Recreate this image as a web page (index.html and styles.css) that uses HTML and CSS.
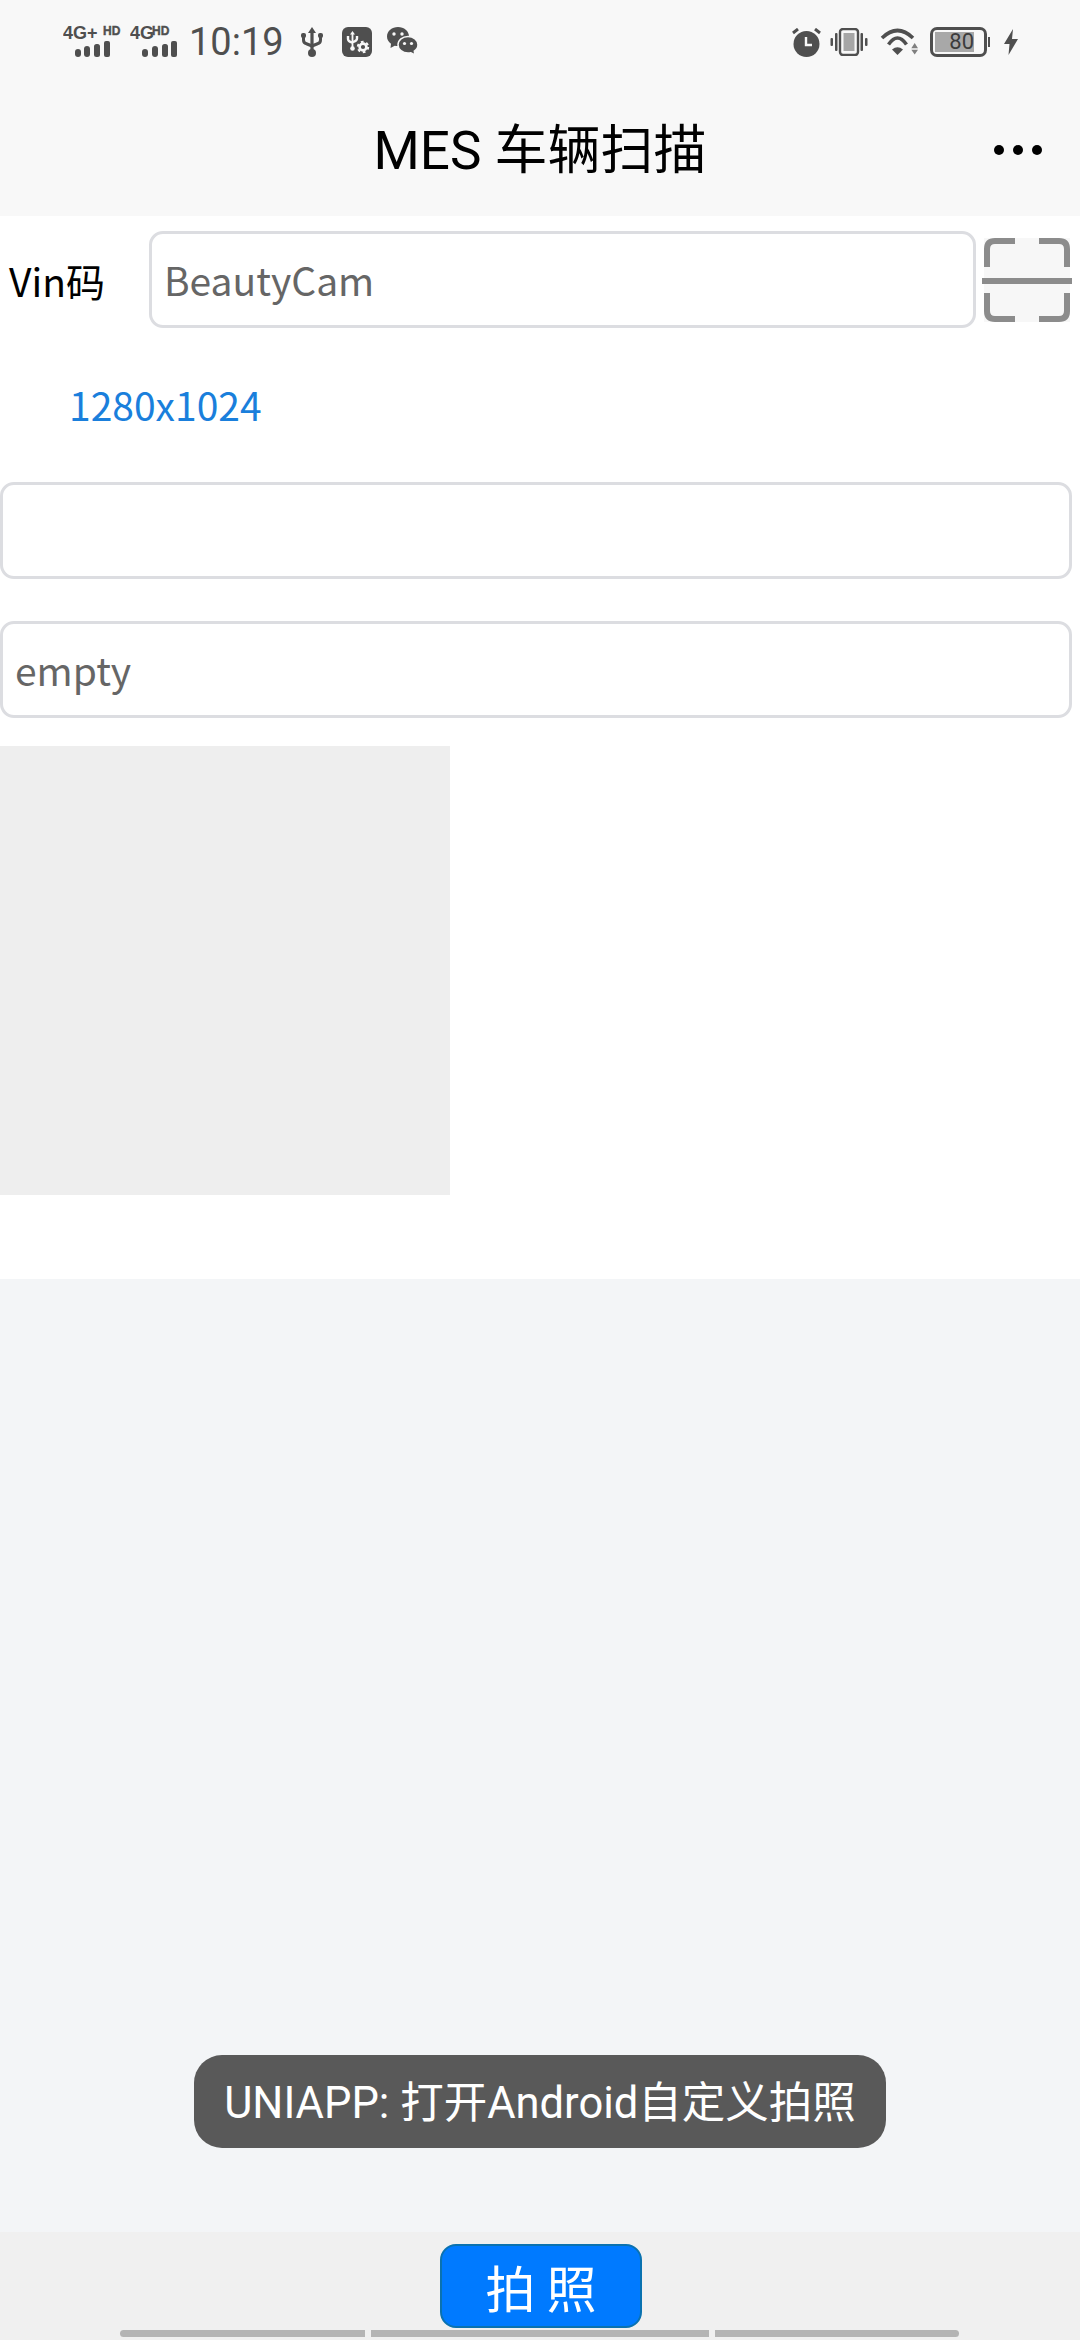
FILE: index.html
```html
<!DOCTYPE html>
<html lang="zh">
<head>
    <meta charset="UTF-8">
    <meta name="viewport" content="width=device-width, initial-scale=1.0">
    <title>MES 车辆扫描</title>
    <link rel="stylesheet" href="styles.css">
</head>
<body>
    <div class="status">
        <div class="status-left">
            <svg class="sig-a" width="60" height="52" viewBox="0 -10 60 52">
                <text class="sig-big" x="0" y="13">4G+</text>
                <text class="sig-small" x="40" y="9">HD</text>
                <rect x="12" y="23" width="6" height="8" rx="3"/>
                <rect x="21" y="20" width="6" height="11" rx="3"/>
                <rect x="31" y="18" width="6" height="13" rx="2.500"/>
                <rect x="41" y="15" width="6" height="16" rx="2"/>
            </svg>
            <svg class="sig-b" width="48" height="52" viewBox="0 -10 48 52">
                <text class="sig-big" x="0" y="13">4G</text>
                <text class="sig-small" x="22" y="9">HD</text>
                <rect x="12" y="23" width="6" height="8" rx="3"/>
                <rect x="22" y="20" width="6" height="11" rx="3"/>
                <rect x="32" y="18" width="6" height="13" rx="2.500"/>
                <rect x="41" y="15" width="6" height="16" rx="2"/>
            </svg>
            <span class="time">10:19</span>
            <svg class="ic-usb" width="22" height="30" viewBox="0 0 22 30">
                <path d="M11 0l4 6h-2.400v18h-3.200V6H7z"/>
                <circle cx="11" cy="26" r="4"/>
                <path class="line" d="M2.500 9v4q0 3 3 3.800L11 19M19.500 9v4q0 3-3 3.800L11 19"/>
                <rect x="0" y="6" width="5" height="5" rx="2"/>
                <rect x="17" y="6" width="5" height="5" rx="2"/>
            </svg>
            <svg class="ic-app" width="30" height="30" viewBox="0 0 30 30">
                <rect width="30" height="30" rx="6"/>
                <path class="white" d="M10.500 4l2.500 3.500h-1.600v13h-1.800v-13h-1.600z"/>
                <circle class="white" cx="10.500" cy="21.500" r="2.300"/>
                <path class="white-line" d="M6 9v3q0 2.500 4.500 3.500M15 9v2.500q0 2.500-4.500 3.500"/>
                <circle class="white-ring" cx="21" cy="20" r="3.400"/>
                <circle class="white-teeth" cx="21" cy="20" r="5.200"/>
            </svg>
            <svg class="ic-chat" width="31" height="30" viewBox="0 0 31 30">
                <path d="M11 0C5 0 0 4 0 9.500c0 3 1.500 5.500 4 7.200L3.500 21l4.200-2.300c1.100.3 2.200.4 3.300.4 6 0 11-4 11-9.600S17 0 11 0z"/>
                <circle class="bg" cx="7" cy="7" r="1.700"/>
                <circle class="bg" cx="15" cy="7" r="1.700"/>
                <path class="chat-front" d="M21 9.500c-5.500 0-10 3.700-10 8.300s4.500 8.300 10 8.300c1 0 2-.1 2.900-.4L28 28l-.7-3.800c2.300-1.500 3.700-3.800 3.700-6.400 0-4.600-4.500-8.300-10-8.300z"/>
                <circle class="bg" cx="17.500" cy="16.500" r="1.600"/>
                <circle class="bg" cx="24.500" cy="16.500" r="1.600"/>
            </svg>
        </div>
        <div class="status-right">
            <svg class="ic-alarm" width="29" height="29" viewBox="0 0 29 29">
                <circle cx="14.500" cy="16" r="13"/>
                <path class="line" d="M1 5l5-4M28 5l-5-4"/>
                <path class="white-line" d="M14 9v8h6"/>
            </svg>
            <svg class="ic-vib" width="38" height="28" viewBox="0 0 38 28">
                <rect class="phone" x="10" y="1" width="18" height="26" rx="3"/>
                <rect class="screen" x="13.500" y="5" width="11" height="18"/>
                <rect x="5" y="5" width="2.500" height="18" rx="1"/>
                <rect x="0.500" y="10" width="2.500" height="8" rx="1"/>
                <rect x="30.500" y="5" width="2.500" height="18" rx="1"/>
                <rect x="35" y="10" width="2.500" height="8" rx="1"/>
            </svg>
            <svg class="ic-wifi" width="38" height="28" viewBox="0 0 38 28">
                <path class="wifi-arc" d="M2 10Q17.500-5 33 10M8.500 16.500Q17.500 3.500 26.500 16.500"/>
                <path d="M12 21.500Q17.500 17 23 21.500L17.500 27z"/>
                <path class="arrows" d="M34.700 15l3.400 5.300h-6.800zM34.700 26.500l-3.400-4.800h6.800z"/>
            </svg>
            <div class="battery">
                <div class="battery-body">
                    <div class="battery-fill">80</div>
                </div>
                <div class="battery-tip"></div>
            </div>
            <svg class="ic-bolt" width="14" height="26" viewBox="0 0 14 26">
                <path d="M9 0L0 15h5.500L4.500 26 14 10H8z"/>
            </svg>
        </div>
    </div>

    <div class="navbar">
        <span class="nav-title">MES 车辆扫描</span>
        <div class="nav-more"><i></i><i></i><i></i></div>
    </div>

    <div class="content">
        <div class="row">
            <div class="row-label">Vin码</div>
            <div class="field field-vin">BeautyCam</div>
            <svg class="scan" width="90" height="88" viewBox="0 0 90 88">
                <rect x="2" y="2" width="86" height="84" fill="#f7f7f7"/>
                <path d="M33 5H13q-8 0-8 8v18M57 5h20q8 0 8 8v18M5 57v18q0 8 8 8h20M85 57v18q0 8-8 8H57"/>
                <path d="M0 45h90"/>
            </svg>
        </div>
        <div class="res">1280x1024</div>
        <div class="field field-wide"></div>
        <div class="field field-wide field-empty">empty</div>
        <div class="preview"></div>
    </div>

    <div class="blank"></div>

    <div class="footer">
        <button class="bot">拍 照</button>
    </div>

    <div class="toast">UNIAPP: 打开Android自定义拍照</div>
    <div class="gesture"><span class="g1"></span><span class="g2"></span><span class="g3"></span></div>
</body>
</html>
```

FILE: styles.css
```css
* {
    box-sizing: border-box;
}
body {
    margin: 0;
    padding: 0;
    width: 1080px;
    height: 2340px;
    position: relative;
    overflow: hidden;
    display: flex;
    flex-direction: column;
    font-family: "Noto Sans CJK SC", "Noto Sans", sans-serif;
    background-color: #f3f5f7;
}

/* status bar */
.status {
    height: 84px;
    background-color: #f8f8f8;
    display: flex;
    justify-content: space-between;
    align-items: center;
    padding: 0 62px 0 63px;
    color: #4f4f4f;
}
.status svg {
    display: block;
    fill: #4f4f4f;
}
.status-left,
.status-right {
    display: flex;
    align-items: center;
}
.sig-big {
    font-family: "Liberation Sans", sans-serif;
    font-weight: bold;
    font-size: 18px;
}
.sig-small {
    font-family: "Liberation Sans", sans-serif;
    font-weight: bold;
    font-size: 12px;
    stroke: #4f4f4f;
    stroke-width: 0.4;
}
.sig-b {
    margin-left: 7px;
}
.time {
    font-family: Roboto, sans-serif;
    font-size: 38px;
    line-height: 44px;
    margin-left: 11px;
}
.ic-usb {
    margin-left: 17px;
}
.ic-app {
    margin-left: 19px;
}
.ic-chat {
    margin-left: 15px;
}
.status .line {
    fill: none;
    stroke: #4f4f4f;
    stroke-width: 3;
}
.status .white {
    fill: #f8f8f8;
}
.status .white-line {
    fill: none;
    stroke: #f8f8f8;
    stroke-width: 2.4;
}
.status .white-ring {
    fill: none;
    stroke: #f8f8f8;
    stroke-width: 2.6;
}
.status .white-teeth {
    fill: none;
    stroke: #f8f8f8;
    stroke-width: 2;
    stroke-dasharray: 2.700 2.740;
}
.status .bg {
    fill: #f8f8f8;
}
.status .chat-front {
    stroke: #f8f8f8;
    stroke-width: 1.5;
}
.status .phone {
    fill: none;
    stroke: #4f4f4f;
    stroke-width: 2.4;
}
.status .screen {
    fill: #a6a6a6;
}
.status .wifi-arc {
    fill: none;
    stroke: #4f4f4f;
    stroke-width: 3.6;
}
.status .arrows {
    fill: #808080;
}
.ic-vib {
    margin-left: 9px;
}
.ic-wifi {
    margin-left: 12px;
}
.battery {
    margin-left: 12px;
    display: flex;
    align-items: center;
}
.battery-body {
    width: 57px;
    height: 30px;
    border: 3px solid #4f4f4f;
    border-radius: 7px;
    padding: 2px;
}
.battery-fill {
    width: 39px;
    height: 20px;
    background-color: #a8a8a8;
    font-family: Roboto, sans-serif;
    font-size: 22px;
    line-height: 20px;
    text-align: right;
    color: #3c3c3c;
}
.battery-tip {
    width: 2px;
    height: 10px;
    margin-left: 1px;
    background-color: #4f4f4f;
}
.ic-bolt {
    margin-left: 14px;
}

/* title bar */
.navbar {
    height: 132px;
    background-color: #f8f8f8;
    position: relative;
    display: flex;
    justify-content: center;
    align-items: center;
    padding-bottom: 9px;
}
.nav-title {
    font-family: Roboto, "Noto Sans CJK SC", sans-serif;
    font-size: 53px;
    color: #000;
}
.nav-more {
    position: absolute;
    right: 38px;
    top: 61px;
    display: flex;
    gap: 9px;
}
.nav-more i {
    display: block;
    width: 10px;
    height: 10px;
    border-radius: 50%;
    background-color: #000;
}

/* form */
.content {
    height: 1063px;
    background-color: #fff;
    padding-top: 15px;
}
.row {
    display: flex;
    align-items: center;
    height: 97px;
}
.row-label {
    width: 149px;
    padding-left: 9px;
    font-size: 39px;
    color: #000;
}
.field {
    height: 97px;
    border: 3px solid #dcdde1;
    border-radius: 14px;
    padding: 0 12px;
    font-size: 39px;
    line-height: 91px;
    color: #666;
    background-color: #fff;
}
.field-vin {
    width: 827px;
}
.scan {
    display: block;
    margin-left: 6px;
    fill: none;
}
.scan path {
    stroke: #8c8c8c;
    stroke-width: 6;
}
.res {
    margin-top: 48px;
    padding-left: 69px;
    height: 56px;
    font-size: 39px;
    line-height: 56px;
    color: #1a7fdc;
}
.field-wide {
    width: 1072px;
    margin-top: 50px;
}
.field-empty {
    margin-top: 42px;
}
.preview {
    width: 450px;
    height: 449px;
    margin-top: 28px;
    background-color: #eeeeee;
}

.blank {
    flex: 1;
    background-color: #f3f5f7;
}
.footer {
    height: 108px;
    background-color: #f0f0f0;
    display: flex;
    justify-content: center;
    padding-top: 12px;
    padding-left: 2px;
}
.bot {
    width: 202px;
    height: 84px;
    background-color: #007aff;
    color: #fff;
    border: 2px solid #0a72b0;
    border-radius: 16px;
    font-family: "Noto Sans CJK SC", sans-serif;
    font-size: 50px;
    padding: 0;
}

/* overlays */
.toast {
    position: absolute;
    left: 194px;
    top: 2055px;
    width: 692px;
    height: 93px;
    border-radius: 28px;
    background-color: #595959;
    color: #fff;
    font-family: Roboto, "Noto Sans CJK SC", sans-serif;
    font-size: 43.500px;
    line-height: 98px;
    text-align: center;
    white-space: nowrap;
}
.gesture {
    position: absolute;
    left: 120px;
    top: 2330px;
    display: flex;
    gap: 6px;
}
.gesture span {
    display: block;
    height: 7px;
    background-color: #b4b4b4;
}
.g1 {
    width: 245px;
    border-radius: 4px 0 0 4px;
}
.g2 {
    width: 338px;
}
.g3 {
    width: 244px;
    border-radius: 0 4px 4px 0;
}
```
